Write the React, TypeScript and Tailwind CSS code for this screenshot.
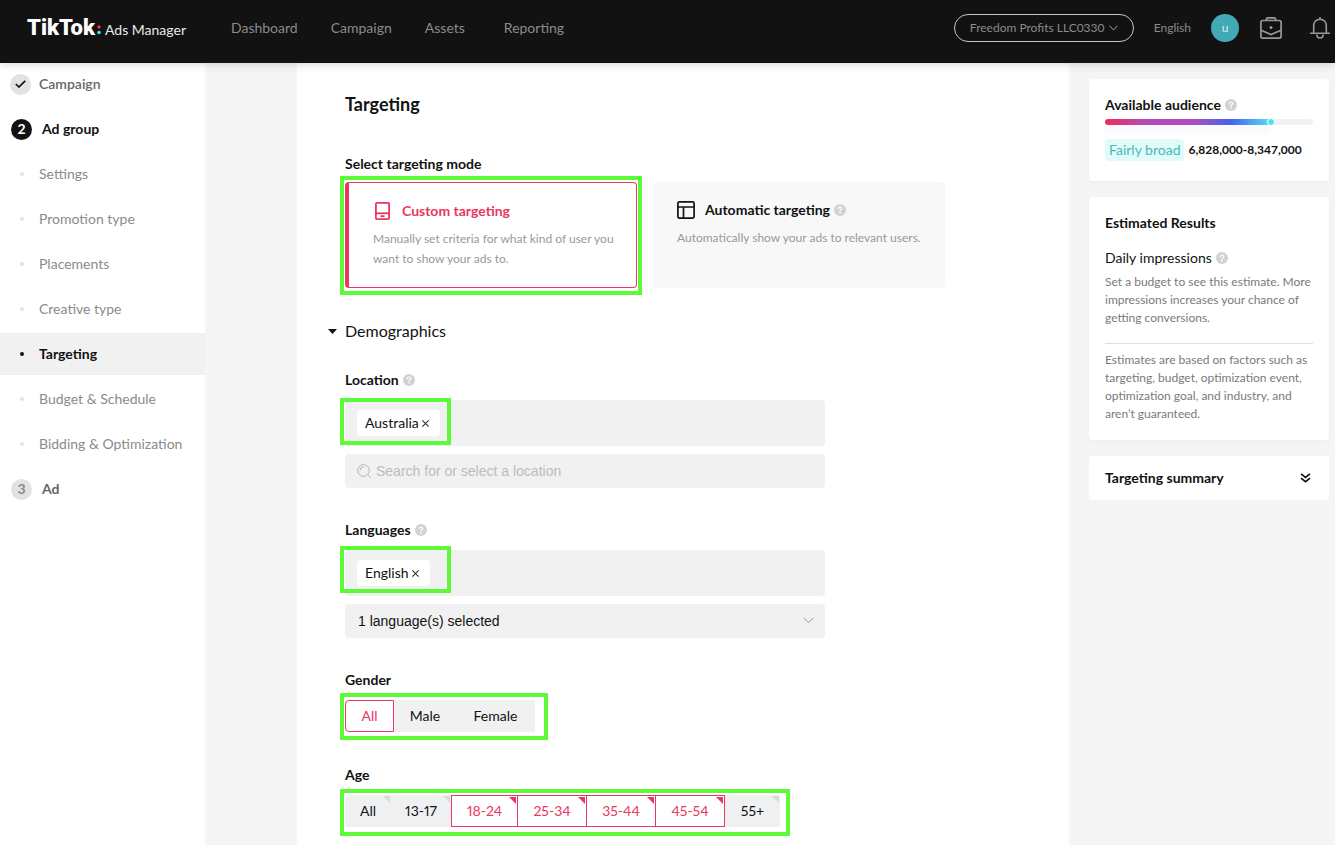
import React, { useState } from 'react';
import clsx from 'clsx';

const navItems = ['Dashboard', 'Campaign', 'Assets', 'Reporting'];

const groupSteps = [
  'Settings',
  'Promotion type',
  'Placements',
  'Creative type',
  'Targeting',
  'Budget & Schedule',
  'Bidding & Optimization',
];

const genders = [
  { label: 'All', width: 'w-[49px]' },
  { label: 'Male', width: 'w-[62px]' },
  { label: 'Female', width: 'w-[79px]' },
];

const ages = [
  { label: 'All', width: 'w-[46px]' },
  { label: '13-17', width: 'w-[60px]' },
  { label: '18-24', width: 'w-[67px]' },
  { label: '25-34', width: 'w-[70px] -ml-px' },
  { label: '35-44', width: 'w-[70px] -ml-px' },
  { label: '45-54', width: 'w-[70px] -ml-px' },
  { label: '55+', width: 'w-[55px]' },
];

const Help = () => (
  <svg className="w-3 h-3 shrink-0" viewBox="0 0 12 12" fill="none" aria-hidden="true">
    <circle cx="6" cy="6" r="6" fill="#d2d2d2" />
    <path
      d="M4.2 4.7C4.2 3.6 5 3 6 3s1.8.6 1.8 1.6C7.8 5.7 6 5.7 6 7"
      stroke="#fff"
      strokeWidth="1.2"
      strokeLinecap="round"
    />
    <circle cx="6" cy="8.9" r=".8" fill="#fff" />
  </svg>
);

const Mark = ({ className }: { className: string }) => (
  <span className={clsx('absolute border-4 border-[#5ffa37] pointer-events-none', className)} />
);

const Tag = ({ text, onRemove }: { text: string; onRemove: () => void }) => (
  <span className="flex items-center gap-[3px] h-[26px] pl-2 pr-[11px] rounded bg-white text-sm text-[#121212]">
    {text}
    <button type="button" aria-label={`Remove ${text}`} onClick={onRemove}>
      <svg className="w-[7px] h-[7px]" viewBox="0 0 7 7" stroke="#333" strokeWidth="1.1">
        <path d="M.4.4l6.2 6.2M6.6.4L.4 6.6" />
      </svg>
    </button>
  </span>
);

const Header = () => (
  <header className="relative z-10 flex items-center h-[63px] pb-2 pl-[27px] pr-[5px] bg-[#121212] text-[#8a8b8b] shadow-[0_2px_8px_rgba(0,0,0,0.15)]">
    <a href="#" className="flex items-baseline text-white">
      <span className="font-['Roboto',sans-serif] text-[22px] leading-7 font-black">TikTok</span>
      <svg className="w-1 h-[10px] ml-[2px] mr-1" viewBox="0 0 4 10">
        <circle cx="2" cy="2" r="1.8" fill="#fe2c55" />
        <circle cx="2" cy="7.500" r="1.8" fill="#25f4ee" />
      </svg>
      <span className="text-sm text-[#e8e8e8]">Ads Manager</span>
    </a>
    <nav className="flex gap-[33px] ml-[45px] text-sm">
      {navItems.map((item) => (
        <a key={item} href="#" className="hover:text-white last:ml-[6px]">{item}</a>
      ))}
    </nav>
    <div className="flex items-center ml-auto text-xs">
      <button type="button" className="flex items-center justify-center gap-1 w-[180px] h-7 rounded-full border border-[#c8c8c8]">
        Freedom Profits LLC0330
        <svg className="w-[9px] h-[6px]" viewBox="0 0 9 6" fill="none" stroke="#a0a0a0">
          <path d="M.5 .7l4 4.3 4-4.3" />
        </svg>
      </button>
      <button type="button" className="ml-5">English</button>
      <span className="flex items-center justify-center w-7 h-7 ml-5 rounded-full bg-[#43a9b5] text-[#d5eef0]">u</span>
      <button type="button" aria-label="Business center" className="ml-[21px]">
        <svg className="w-[22px] h-[22px]" viewBox="0 0 22 22" fill="none" stroke="#989898" strokeWidth="1.7">
          <rect x=".9" y="3.5" width="20.2" height="17.6" rx="1.8" />
          <path d="M6.5 3.5V2c0-.7.4-1.1 1.1-1.1h6.8c.7 0 1.1.4 1.1 1.1v1.5" />
          <path d="M1 13.2l10 4.3 10-4.3" />
          <circle cx="11" cy="10.5" r="1.5" fill="#989898" stroke="none" />
        </svg>
      </button>
      <button type="button" aria-label="Notifications" className="ml-7">
        <svg className="w-5 h-[22px]" viewBox="0 0 20 22" fill="none" stroke="#989898" strokeWidth="1.6">
          <path d="M10 0v2.5M3.7 16V8.500a6.3 6.3 0 0 1 12.6 0V16M0 16.3h20M6.8 17.5c0 4.6 6.4 4.6 6.4 0" />
        </svg>
      </button>
    </div>
  </header>
);

const Sidebar = () => {
  const [active, setActive] = useState('Targeting');

  return (
    <aside className="flex flex-col gap-[3px] w-[205px] shrink-0 bg-white text-sm">
      <a href="#" className="flex items-center gap-2 h-[42px] pl-[10px] font-semibold text-[#666]">
        <span className="flex items-center justify-center w-[21px] h-[21px] rounded-full bg-[#e2e2e2]">
          <svg className="w-[11px] h-2" viewBox="0 0 11 8" fill="none" stroke="#121212" strokeWidth="1.7">
            <path d="M.8 4l3.1 3L10.2.8" />
          </svg>
        </span>
        Campaign
      </a>
      <a href="#" className="flex items-center gap-[10px] h-[42px] pl-[11px] font-bold text-[#121212]">
        <span className="flex items-center justify-center w-[21px] h-[21px] rounded-full bg-[#121212] text-white">2</span>
        Ad group
      </a>
      {groupSteps.map((step) => (
        <a
          key={step}
          href="#"
          onClick={() => setActive(step)}
          className={clsx(
            'flex items-center gap-[15px] h-[42px] pl-5',
            step === active ? 'bg-[#f1f1f1] font-bold text-[#121212]' : 'text-[#8a8b8b]'
          )}
        >
          <span className={clsx('w-1 h-1 rounded-full', step === active ? 'bg-[#121212]' : 'bg-[#e3e3e3]')} />
          {step}
        </a>
      ))}
      <a href="#" className="flex items-center gap-[10px] h-[42px] pl-[11px] font-bold text-[#666]">
        <span className="flex items-center justify-center w-[21px] h-[21px] rounded-full bg-[#e2e2e2] text-[#8a8b8b]">3</span>
        Ad
      </a>
    </aside>
  );
};

const Summary = () => (
  <aside className="flex flex-col gap-4 w-60 shrink-0 ml-5 mr-[6px] pt-4 text-sm text-[#121212]">
    <section className="px-4 pt-4 pb-5 rounded bg-white shadow-[0_2px_4px_rgba(0,0,0,0.03)]">
      <h2 className="flex items-center gap-1 font-bold">Available audience <Help /></h2>
      <div className="h-[6px] mt-1 rounded-full bg-[#f1f1f1]">
        <div className="relative w-4/5 h-full rounded-l-full bg-[linear-gradient(90deg,#ee2c58_0%,#b04dba_25%,#b04dba_52%,#4462ef_76%,#55d5ee_98%)] shadow-[0_6px_6px_rgba(200,180,240,0.15)]">
          <span className="absolute -right-1 -top-px w-2 h-2 rounded-full border border-white bg-[#4de1ea]" />
        </div>
      </div>
      <p className="flex items-center gap-1 mt-[14px]">
        <span className="h-[22px] px-1 rounded bg-[#dffcfb] leading-[22px] text-[#4bb8b4]">Fairly broad</span>
        <span className="text-xs font-bold">6,828,000-8,347,000</span>
      </p>
    </section>
    <section className="px-4 pt-4 pb-[17px] rounded bg-white shadow-[0_2px_4px_rgba(0,0,0,0.03)]">
      <h2 className="font-bold">Estimated Results</h2>
      <h3 className="flex items-center gap-1 mt-[15px]">Daily impressions <Help /></h3>
      <p className="mt-[5px] text-xs leading-[18px] text-[#7a7a7a]">
        Set a budget to see this estimate. More impressions increases your chance of getting conversions.
      </p>
      <p className="mt-4 pt-[7px] border-t border-[#dedede] text-xs leading-[18px] text-[#7a7a7a]">
        Estimates are based on factors such as targeting, budget, optimization event, optimization goal, and industry, and aren’t guaranteed.
      </p>
    </section>
    <button type="button" className="flex items-center justify-between h-11 pl-4 pr-[18px] rounded bg-white font-bold">
      Targeting summary
      <svg className="w-[11px] h-[10px]" viewBox="0 0 11 10" fill="none" stroke="#121212" strokeWidth="1.7">
        <path d="M1 .8l4.5 3.5L10 .8M1 5.1l4.5 3.5L10 5.1" />
      </svg>
    </button>
  </aside>
);

const App = () => {
  const [mode, setMode] = useState('custom');
  const [locations, setLocations] = useState(['Australia']);
  const [languages, setLanguages] = useState(['English']);
  const [gender, setGender] = useState('All');
  const [selectedAges, setSelectedAges] = useState(['18-24', '25-34', '35-44', '45-54']);

  const toggleAge = (age: string) => {
    setSelectedAges((prev) => (prev.includes(age) ? prev.filter((a) => a !== age) : [...prev, age]));
  };

  return (
    <div className="flex flex-col min-h-screen bg-[#f5f5f5] font-['Lato',sans-serif]">
      <Header />
      <div className="flex flex-1">
        <Sidebar />
        <main className="flex-1 min-w-0 ml-[92px] px-12 pt-[27px] pb-2 bg-white text-sm text-[#121212]">
          <h1 className="text-lg font-bold">Targeting</h1>

          <h2 className="mt-9 mb-2 font-bold">Select targeting mode</h2>
          <div className="flex gap-4">
            <div className="relative w-[292px]">
              <button
                type="button"
                aria-pressed={mode === 'custom'}
                onClick={() => setMode('custom')}
                className="flex flex-col w-full h-[106px] pt-[18px] pl-6 pr-5 rounded border border-l-4 border-[#ea3660] bg-white text-left"
              >
                <span className="flex items-center gap-3 pl-[2px] font-bold text-[#ea3660]">
                  <svg className="w-[15px] h-[18px]" viewBox="0 0 15 18" fill="none" stroke="#ea3660" strokeWidth="1.8">
                    <rect x=".9" y=".9" width="13.2" height="16.2" rx="1" />
                    <path d="M1 11.3h13" />
                    <path d="M5.5 14.2h4" />
                  </svg>
                  Custom targeting
                </span>
                <span className="mt-2 text-xs leading-5 text-[#999]">
                  Manually set criteria for what kind of user you want to show your ads to.
                </span>
              </button>
              <Mark className="-inset-x-[5px] -top-[6px] -bottom-[7px]" />
            </div>
            <button
              type="button"
              aria-pressed={mode === 'auto'}
              onClick={() => setMode('auto')}
              className="flex flex-col w-[292px] h-[106px] pt-[18px] px-6 rounded bg-[#f8f8f8] text-left"
            >
              <span className="flex items-center font-bold">
                <svg className="w-[18px] h-[18px] mr-[10px]" viewBox="0 0 18 18" fill="none" stroke="#121212" strokeWidth="1.7">
                  <rect x=".9" y=".9" width="16.2" height="16.2" rx="1.5" />
                  <path d="M1 6h16M6.5 6v11" />
                </svg>
                <span className="mr-1">Automatic targeting</span>
                <Help />
              </span>
              <span className="mt-2 text-xs leading-5 text-[#999]">
                Automatically show your ads to relevant users.
              </span>
            </button>
          </div>

          <button type="button" className="flex items-center gap-2 -ml-[17px] mt-[31px] text-base">
            <svg className="w-[9px] h-[5px]" viewBox="0 0 9 5" fill="#121212">
              <path d="M0 0h9L4.5 5z" />
            </svg>
            Demographics
          </button>

          <label htmlFor="location" className="flex items-center gap-1 mt-[27px] mb-[10px] font-bold">
            Location <Help />
          </label>
          <div className="relative flex items-center gap-2 max-w-[480px] h-[46px] px-3 rounded bg-[#f1f1f1]">
            {locations.map((item) => (
              <Tag key={item} text={item} onRemove={() => setLocations(locations.filter((l) => l !== item))} />
            ))}
            <Mark className="-left-[5px] -top-[2px] w-[111px] h-[47px]" />
          </div>
          <div className="flex items-center gap-1 max-w-[480px] h-[34px] mt-2 px-3 rounded bg-[#f1f1f1] font-['Liberation_Sans',sans-serif]">
            <svg className="w-[15px] h-[15px]" viewBox="0 0 15 15" fill="none" stroke="#b4b4b4">
              <circle cx="6.5" cy="6.5" r="5.8" />
              <path d="M3 6.5A3.5 3.5 0 0 1 6.5 3M10.7 10.7l3.3 3.3" />
            </svg>
            <input
              id="location"
              type="text"
              placeholder="Search for or select a location"
              className="flex-1 bg-transparent outline-none placeholder:text-[#bcbcbc]"
            />
          </div>

          <label htmlFor="language" className="flex items-center gap-1 mt-8 mb-[10px] font-bold">
            Languages <Help />
          </label>
          <div className="relative flex items-center gap-2 max-w-[480px] h-[46px] px-3 rounded bg-[#f1f1f1]">
            {languages.map((item) => (
              <Tag key={item} text={item} onRemove={() => setLanguages(languages.filter((l) => l !== item))} />
            ))}
            <Mark className="-left-[5px] -top-1 w-[111px] h-[47px]" />
          </div>
          <div className="relative max-w-[480px] mt-2">
            <select
              id="language"
              className="w-full h-[34px] px-[13px] rounded appearance-none bg-[#f1f1f1] font-['Liberation_Sans',sans-serif]"
            >
              <option>1 language(s) selected</option>
            </select>
            <svg className="absolute right-[11px] top-[13px] w-[11px] h-[7px] pointer-events-none" viewBox="0 0 11 7" fill="none" stroke="#999">
              <path d="M.5.7l5 5 5-5" />
            </svg>
          </div>

          <h2 className="mt-8 mb-[10px] font-bold">Gender</h2>
          <div className="relative flex w-[190px]">
            {genders.map(({ label, width }) => (
              <button
                key={label}
                type="button"
                aria-pressed={gender === label}
                onClick={() => setGender(label)}
                className={clsx(
                  'h-8 first:rounded-l last:rounded-r',
                  width,
                  gender === label ? 'border border-[#ea3660] bg-white text-[#ea3660]' : 'bg-[#f1f1f1]'
                )}
              >
                {label}
              </button>
            ))}
            <Mark className="-left-[5px] -right-[13px] -top-[7px] -bottom-2" />
          </div>

          <h2 className="mt-[33px] mb-[10px] font-bold">Age</h2>
          <div className="relative flex w-[435px] proportional-nums">
            {ages.map(({ label, width }) => {
              const selected = selectedAges.includes(label);
              return (
                <button
                  key={label}
                  type="button"
                  aria-pressed={selected}
                  onClick={() => toggleAge(label)}
                  className={clsx(
                    'relative h-8 first:rounded-l last:rounded-r',
                    width,
                    selected ? 'border border-[#ea3660] bg-white text-[#ea3660]' : 'bg-[#eff0f1]'
                  )}
                >
                  {label}
                  <svg
                    className={clsx('absolute right-px top-px w-[7px] h-[7px]', selected ? 'text-[#ea3660]' : 'text-[#dadada]')}
                    viewBox="0 0 7 7"
                    fill="currentColor"
                  >
                    <path d="M0 0h7v7z" />
                  </svg>
                </button>
              );
            })}
            <Mark className="-left-[5px] -right-[10px] -top-[6px] -bottom-[9px]" />
          </div>
        </main>
        <Summary />
      </div>
    </div>
  );
};

export default App;
